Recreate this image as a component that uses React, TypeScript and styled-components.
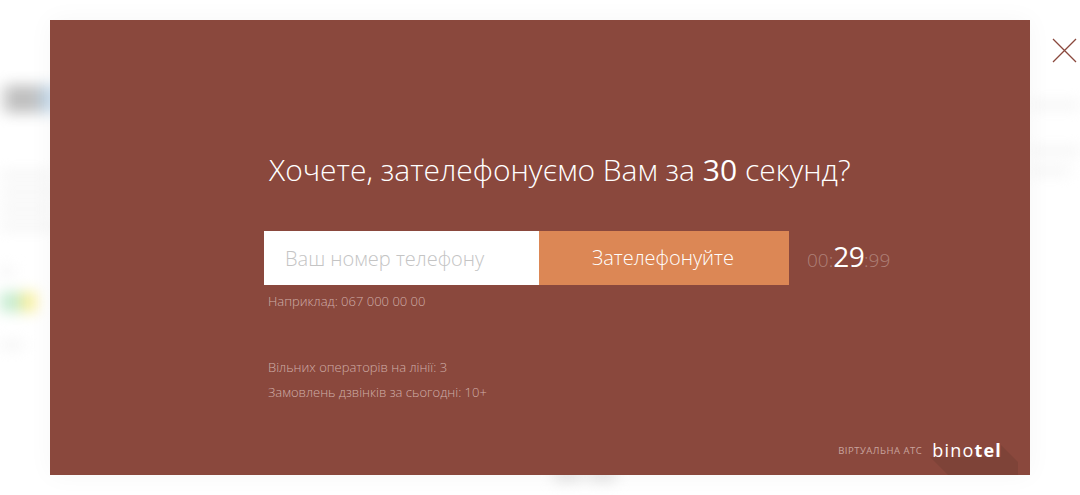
import styled, { createGlobalStyle } from "styled-components";

const GlobalStyle = createGlobalStyle`
  html, body {
    margin: 0;
    padding: 0;
    background: #fff;
  }
  body {
    font-family: "Open Sans", "Liberation Sans", sans-serif;
    overflow: hidden;
  }
`;

const Page = styled.div`
  position: relative;
  width: 1080px;
  height: 495px;
  overflow: hidden;
  background: #fff;
`;

/* the site behind the popup, blurred out */
const Backdrop = styled.div`
  display: flex;
  flex-direction: column;
  height: 100%;
  filter: blur(7px);
`;

const BackdropMain = styled.div`
  display: flex;
  flex: 1;
  justify-content: space-between;
`;

const BackdropFooter = styled.div`
  display: flex;
  justify-content: center;
  gap: 6px;
  height: 23px;
  padding-left: 90px;
`;

const FooterBlur = styled.div`
  width: 28px;
  height: 8px;
  background: #d8d8d8;
`;

const SideColumn = styled.div`
  display: flex;
  flex-direction: column;
  width: 60px;
  padding-top: 85px;
`;

const RightColumn = styled.div`
  display: flex;
  flex-direction: column;
  width: 50px;
  padding-top: 102px;
`;

const LogoBlur = styled.div`
  width: 56px;
  height: 28px;
  margin-bottom: 59px;
  background: linear-gradient(90deg, #e8e8e8 0, #bdbdbd 25%, #c2c2c2 65%, #c4dcf0 85%);
`;

const TextBlur = styled.div<{ $w: number; $gap: number }>`
  width: ${p => p.$w}px;
  height: 6px;
  margin-bottom: ${p => p.$gap}px;
  background: #f0f0f0;
`;

const BadgeBlur = styled.div`
  width: 36px;
  height: 20px;
  margin-bottom: 30px;
  background: linear-gradient(90deg, #c6ecd0 0, #c6ecd0 50%, #f9ee96 70%, #f9ee96 100%);
`;

const Overlay = styled.div`
  position: absolute;
  inset: 0;
  padding: 20px 50px;
  box-sizing: border-box;
`;

const Modal = styled.div`
  position: relative;
  height: 455px;
  box-sizing: border-box;
  padding: 130px 0 0 214px;
  background: #8a483d;
  box-shadow: 0 0 24px rgba(0, 0, 0, 0.04);
  overflow: hidden;
`;

const Title = styled.h2`
  margin: 0 0 41px 5px;
  font-size: 30px;
  line-height: 40px;
  font-weight: 300;
  color: #fff;
  white-space: nowrap;

  b {
    font-weight: 400;
  }
`;

const FormRow = styled.div`
  display: flex;
  align-items: center;
  height: 54px;
`;

const PhoneInput = styled.input`
  width: 275px;
  height: 54px;
  box-sizing: border-box;
  padding: 0 21px;
  border: none;
  border-radius: 0;
  outline: none;
  background: #fff;
  font-family: inherit;
  font-size: 20px;
  font-weight: 300;
  color: #333;

  &::placeholder {
    color: #c4c4c4;
    opacity: 1;
  }
`;

const CallButton = styled.button`
  width: 250px;
  height: 54px;
  padding: 0 2px 2px 0;
  border: none;
  border-radius: 0;
  background: #dc8755;
  font-family: inherit;
  font-size: 20px;
  font-weight: 300;
  color: #fff;
  cursor: pointer;
`;

const Timer = styled.div`
  display: flex;
  align-items: baseline;
  margin-left: 18px;
  padding-bottom: 5px;
  font-size: 19px;
  font-weight: 300;
  color: #ae8078;

  strong {
    font-size: 28px;
    font-weight: 400;
    color: #fff;
    letter-spacing: -0.6px;
  }
`;

const Hint = styled.div`
  margin: 7px 0 0 4px;
  font-size: 13px;
  line-height: 18px;
  font-weight: 300;
  color: #d0aea8;
`;

const Stats = styled.div`
  display: flex;
  flex-direction: column;
  gap: 7px;
  margin: 48px 0 0 4px;
  font-size: 13px;
  line-height: 18px;
  font-weight: 300;
  color: #d0aea8;
`;

const Brand = styled.div`
  position: absolute;
  right: 28px;
  bottom: 14px;
  display: flex;
  align-items: center;
  gap: 10px;
`;

const BrandLabel = styled.span`
  font-size: 9.5px;
  letter-spacing: 0.5px;
  color: #c9a49d;
`;

const BrandName = styled.span`
  position: relative;
  font-size: 18px;
  line-height: 22px;
  letter-spacing: 1.2px;
  color: #fff;

  b {
    font-weight: 700;
  }
`;

const BrandShadow = styled.svg`
  position: absolute;
  right: 12px;
  bottom: 0;
  display: block;
`;

const CloseButton = styled.button`
  position: absolute;
  top: 38px;
  right: 3px;
  display: flex;
  width: 25px;
  height: 25px;
  padding: 0;
  border: none;
  background: none;
  cursor: pointer;
`;

export default function App() {
  return (
    <Page>
      <GlobalStyle />
      <Backdrop>
        <BackdropMain>
          <SideColumn>
            <LogoBlur />
            <TextBlur $w={52} $gap={11} />
            <TextBlur $w={56} $gap={11} />
            <TextBlur $w={52} $gap={11} />
            <TextBlur $w={56} $gap={39} />
            <TextBlur $w={14} $gap={18} />
            <BadgeBlur />
            <TextBlur $w={24} $gap={0} />
          </SideColumn>
          <RightColumn>
            <TextBlur $w={50} $gap={40} />
            <TextBlur $w={50} $gap={14} />
            <TextBlur $w={40} $gap={0} />
          </RightColumn>
        </BackdropMain>
        <BackdropFooter>
          <FooterBlur />
          <FooterBlur />
        </BackdropFooter>
      </Backdrop>
      <Overlay>
        <Modal>
          <BrandShadow width="100" height="32" viewBox="0 0 100 32">
            <path d="M12 14 L83 14 L83 2 L100 19 L100 32 L30 32 Z" fill="#7e4338" />
          </BrandShadow>
          <Title>
            Хочете, зателефонуємо Вам за <b>30</b> секунд?
          </Title>
          <FormRow>
            <PhoneInput placeholder="Ваш номер телефону" />
            <CallButton>Зателефонуйте</CallButton>
            <Timer>
              00:<strong>29</strong>:99
            </Timer>
          </FormRow>
          <Hint>Наприклад: 067 000 00 00</Hint>
          <Stats>
            <span>Вільних операторів на лінії: 3</span>
            <span>Замовлень дзвінків за сьогодні: 10+</span>
          </Stats>
          <Brand>
            <BrandLabel>ВІРТУАЛЬНА АТС</BrandLabel>
            <BrandName>
              bino<b>tel</b>
            </BrandName>
          </Brand>
        </Modal>
        <CloseButton aria-label="Закрити">
          <svg width="25" height="25" viewBox="0 0 25 25">
            <path d="M1 1 L24 24 M24 1 L1 24" stroke="#8a483d" strokeWidth="1.3" fill="none" />
          </svg>
        </CloseButton>
      </Overlay>
    </Page>
  );
}
